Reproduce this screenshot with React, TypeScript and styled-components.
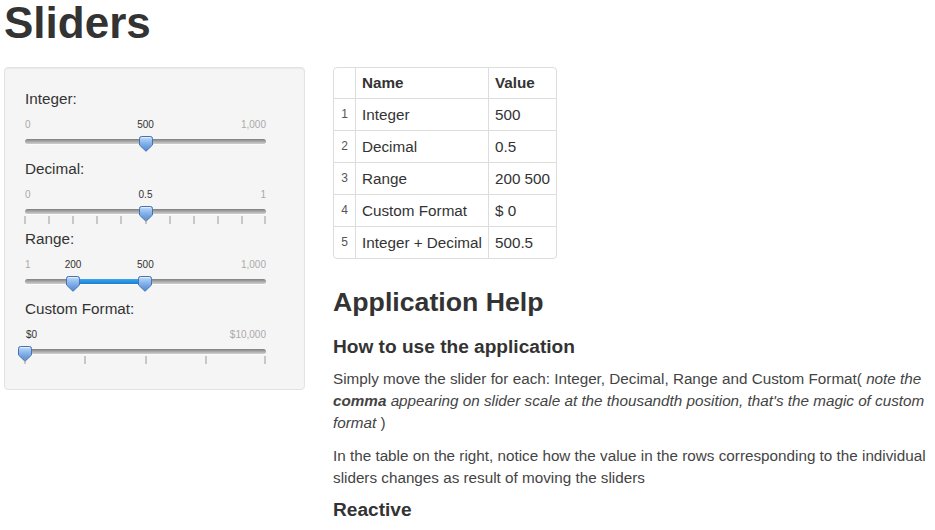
import React from "react";
import styled, { createGlobalStyle } from "styled-components";

const GlobalStyle = createGlobalStyle`
	html, body {
		margin: 0;
		padding: 0;
		background: #fff;
	}
	body {
		font-family: "Liberation Sans", Arial, sans-serif;
		font-size: 15.26px;
		line-height: 21.8px;
		color: #333;
	}
`;

const Page = styled.div`
	padding: 0 4px;
`;

const Title = styled.h1`
	font-size: 44px;
	line-height: 46px;
	font-weight: bold;
	margin: 0 0 21px;
	color: #333;
`;

const Columns = styled.div`
	display: flex;
	align-items: flex-start;
	gap: 28px;
`;

const Well = styled.div`
	width: 301px;
	box-sizing: border-box;
	padding: 20px 20px 21px;
	background: #f5f5f5;
	border: 1px solid #e3e3e3;
	border-radius: 4px;
	box-shadow: inset 0 1px 1px rgba(0, 0, 0, 0.05);
`;

const SliderBlock = styled.div`
	display: flex;
	flex-direction: column;
`;

const Label = styled.label`
	display: block;
	font-size: 15.26px;
	line-height: 22px;
	color: #333;
`;

const SliderBox = styled.div`
	width: 241px;
	display: flex;
	flex-direction: column;
`;

const ScaleRow = styled.div`
	position: relative;
	height: 29px;
`;

const ScaleText = styled.span<{ $dark?: boolean; $align: "left" | "center" | "right" }>`
	position: absolute;
	top: 10px;
	font-size: 10px;
	line-height: 10px;
	white-space: nowrap;
	color: ${(p) => (p.$dark ? "#333" : "#aaa")};
	transform: ${(p) =>
		p.$align === "center" ? "translateX(-50%)" : p.$align === "right" ? "translateX(-100%)" : "none"};
`;

const Track = styled.div`
	position: relative;
	height: 5px;
	border-radius: 3px;
	background: linear-gradient(#7e7e7e, #a9a9a9 50%, #cfcfcf);
	box-shadow: 0 1px 0 rgba(255, 255, 255, 0.6);
`;

const Fill = styled.div`
	position: absolute;
	top: 0;
	bottom: 0;
	background: linear-gradient(#3ba6ee, #1a7fd0);
`;

const Thumb = styled.div`
	position: absolute;
	top: -3px;
	width: 14px;
	height: 16px;
	transform: translateX(-50%);
	svg {
		display: block;
	}
`;

const TickRow = styled.div`
	position: relative;
	height: 14px;
`;

const Tick = styled.span`
	position: absolute;
	top: 2px;
	width: 1px;
	height: 8px;
	background: #999;
	transform: translateX(-0.5px);
`;

const Main = styled.div`
	flex: 1;
	min-width: 0;
	padding-right: 0;
`;

const Table = styled.table`
	border-collapse: separate;
	border-spacing: 0;
	border: 1px solid #ddd;
	border-radius: 4px;
	margin: 0 0 22px;
	font-size: 15.26px;
	line-height: 21px;

	th,
	td {
		padding: 5px 6px;
		text-align: left;
		border-left: 1px solid #ddd;
		border-top: 1px solid #ddd;
		white-space: nowrap;
	}
	th {
		font-weight: bold;
		border-top: none;
		padding: 4px 6px 5px;
	}
	th:first-child,
	td:first-child {
		border-left: none;
	}
`;

const IndexCell = styled.td`
	&& {
		width: 9px;
		padding: 5px 6px;
		font-size: 12px;
		color: #555;
		text-align: center;
	}
`;

const H3 = styled.h3`
	font-size: 26.7px;
	line-height: 43.6px;
	margin: 11px 0;
	font-weight: bold;
`;

const H4 = styled.h4`
	font-size: 19.1px;
	line-height: 21.8px;
	margin: 11px 0;
	font-weight: bold;
`;

const Para = styled.p`
	margin: 0 0 11px;
	color: #444;
`;

function ThumbIcon() {
	return (
		<svg width="14" height="16" viewBox="0 0 14 16">
			<defs>
				<linearGradient id="thumbGrad" x1="0" y1="0" x2="0" y2="1">
					<stop offset="0" stopColor="#c4dcf7" />
					<stop offset="0.45" stopColor="#86b3ea" />
					<stop offset="1" stopColor="#4d88d4" />
				</linearGradient>
			</defs>
			<path
				d="M2.5 0.5 H11.5 Q13.5 0.5 13.5 2.5 V9 L7 15.3 L0.5 9 V2.5 Q0.5 0.5 2.5 0.5 Z"
				fill="url(#thumbGrad)"
				stroke="#4273b3"
				strokeWidth="1"
			/>
			<path d="M2.5 1.6 H11.5" stroke="#e6f0fc" strokeWidth="1" />
		</svg>
	);
}

type SliderProps = {
	label: string;
	min: number;
	max: number;
	values: number[];
	format: (v: number) => string;
	ticks?: number;
};

function Slider({ label, min, max, values, format, ticks }: SliderProps) {
	const pct = (v: number) => ((v - min) / (max - min)) * 100;
	const hideMin = values.some((v) => pct(v) < 8);
	const tickList = ticks ? Array.from({ length: ticks }, (_, i) => (i / (ticks - 1)) * 100) : [];

	return (
		<SliderBlock>
			<Label>{label}</Label>
			<SliderBox>
				<ScaleRow>
					{!hideMin && <ScaleText $align="left">{format(min)}</ScaleText>}
					<ScaleText $align="right" style={{ left: "100%" }}>
						{format(max)}
					</ScaleText>
					{values.map((v, i) => (
						<ScaleText
							key={i}
							$dark
							$align={pct(v) < 8 ? "left" : "center"}
							style={{ left: pct(v) < 8 ? "1px" : `${pct(v)}%` }}
						>
							{format(v)}
						</ScaleText>
					))}
				</ScaleRow>
				<Track>
					{values.length === 2 && (
						<Fill style={{ left: `${pct(values[0])}%`, width: `${pct(values[1]) - pct(values[0])}%` }} />
					)}
					{values.map((v, i) => (
						<Thumb key={i} style={{ left: `${pct(v)}%` }}>
							<ThumbIcon />
						</Thumb>
					))}
				</Track>
				<TickRow>
					{tickList.map((t, i) => (
						<Tick key={i} style={{ left: `calc(${t}% ${t === 100 ? "- 1px" : "+ 0px"})` }} />
					))}
				</TickRow>
			</SliderBox>
		</SliderBlock>
	);
}

const withCommas = (v: number) => v.toLocaleString("en-US");

const rows = [
	{ name: "Integer", value: "500" },
	{ name: "Decimal", value: "0.5" },
	{ name: "Range", value: "200 500" },
	{ name: "Custom Format", value: "$ 0" },
	{ name: "Integer + Decimal", value: "500.5" },
];

export default function App() {
	return (
		<>
			<GlobalStyle />
			<Page>
				<Title>Sliders</Title>
				<Columns>
					<Well>
						<Slider label="Integer:" min={0} max={1000} values={[500]} format={withCommas} />
						<Slider label="Decimal:" min={0} max={1} values={[0.5]} format={(v) => String(v)} ticks={11} />
						<Slider label="Range:" min={1} max={1000} values={[200, 500]} format={withCommas} />
						<Slider
							label="Custom Format:"
							min={0}
							max={10000}
							values={[0]}
							format={(v) => "$" + withCommas(v)}
							ticks={5}
						/>
					</Well>
					<Main>
						<Table>
							<thead>
								<tr>
									<th></th>
									<th>Name</th>
									<th>Value</th>
								</tr>
							</thead>
							<tbody>
								{rows.map((r, i) => (
									<tr key={r.name}>
										<IndexCell>{i + 1}</IndexCell>
										<td>{r.name}</td>
										<td>{r.value}</td>
									</tr>
								))}
							</tbody>
						</Table>
						<H3>Application Help</H3>
						<H4>How to use the application</H4>
						<Para>
							Simply move the slider for each: Integer, Decimal, Range and Custom Format({" "}
							<i>
								note the <b>comma</b> appearing on slider scale at the thousandth position, that's the magic
								of custom format
							</i>{" "}
							)
						</Para>
						<Para>
							In the table on the right, notice how the value in the rows corresponding to the individual
							sliders changes as result of moving the sliders
						</Para>
						<H4>Reactive</H4>
					</Main>
				</Columns>
			</Page>
		</>
	);
}
